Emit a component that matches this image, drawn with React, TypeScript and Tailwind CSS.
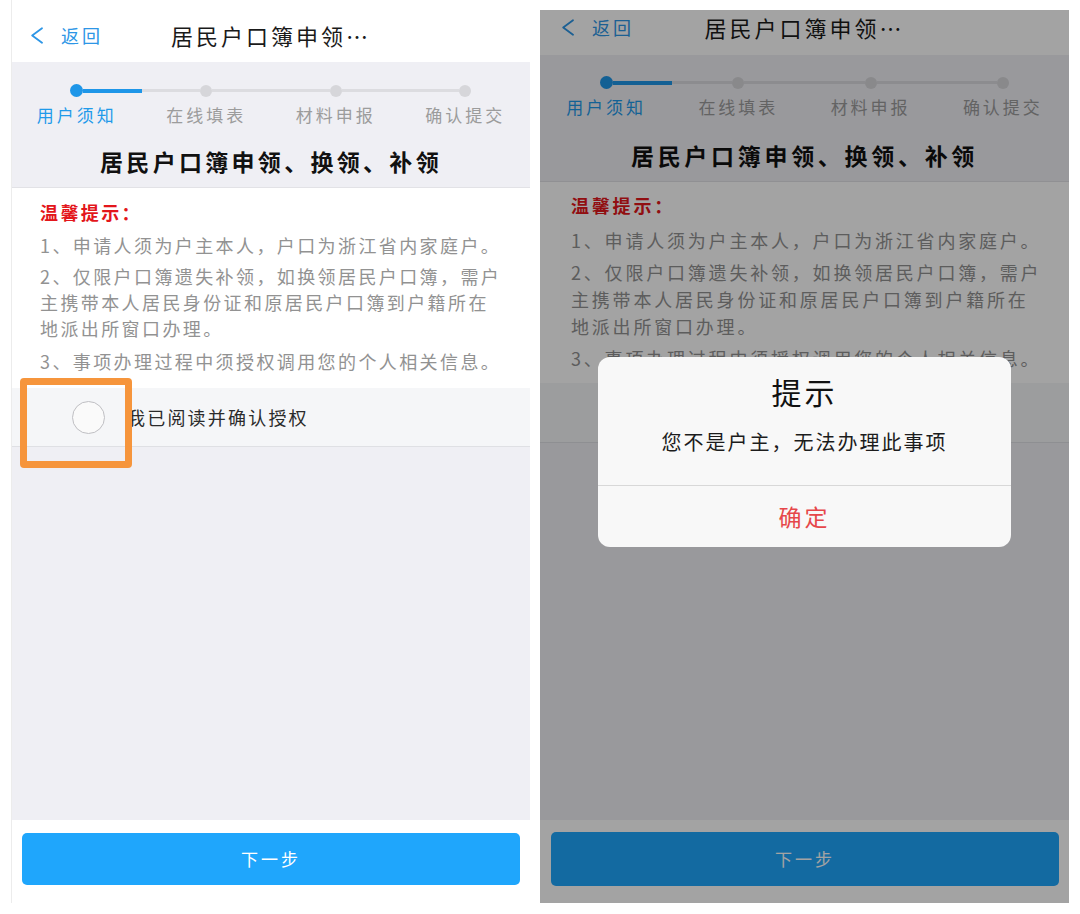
import React from 'react';

const steps = ['用户须知', '在线填表', '材料申报', '确认提交'];

function Chevron() {
  return (
    <svg width="14" height="17" viewBox="0 0 14 17" fill="none">
      <path d="M12 1.2 L2.2 8.5 L12 15.8" stroke="currentColor" strokeWidth="1.8" strokeLinecap="round" strokeLinejoin="round" />
    </svg>
  );
}

function Phone({ wide }: { wide: boolean }) {
  const v = wide
    ? {
        nav: 'h-[45px] pb-[11px]',
        back: 'pl-[21px]',
        band: 'h-[127px] pt-[21px]',
        title: 'mt-[23px] tracking-[3.7px]',
        content: 'h-[201px] pt-[10px] pl-[31px] leading-[27px] tracking-[2.8px]',
        p1: 'mt-[8px]',
        p2: 'mt-[5px]',
        p3: 'mt-[5px]',
        row: 'h-[60px] pl-[62px]',
        bottom: 'pt-[12px] pl-[11px] pr-[10px]',
        btn: 'h-[54px]',
      }
    : {
        nav: 'h-[62px] pt-[8px]',
        back: 'pl-[18px]',
        band: 'h-[126px] pt-[22px]',
        title: 'mt-[21px] tracking-[3.3px]',
        content: 'h-[200px] pt-[11px] pl-[28px] leading-[26px] tracking-[2.4px]',
        p1: 'mt-[7px]',
        p2: 'mt-[5px]',
        p3: 'mt-[7px]',
        row: 'h-[59px] pl-[60px]',
        bottom: 'pt-[13px] px-[10px]',
        btn: 'h-[52px]',
      };

  return (
    <div className="flex h-full w-full flex-col bg-[#efeff4]">
      {/* nav */}
      <div className={`grid shrink-0 grid-cols-[1fr_auto_1fr] items-center bg-white ${v.nav}`}>
        <div className={`flex items-center gap-[17px] text-[#2d96e6] ${v.back}`}>
          <Chevron />
          <span className="text-[18px] tracking-[3px]">返回</span>
        </div>
        <div className="text-[22px] tracking-[3px] text-[#1a1a1a]">居民户口簿申领⋯</div>
        <div />
      </div>

      {/* stepper */}
      <div className={`shrink-0 border-b border-[#e2e2e6] bg-[#efeff4] ${v.band}`}>
        <div className="grid grid-cols-4">
          {steps.map((s, i) => (
            <div key={s} className="flex flex-col items-center">
              <div className="flex h-[13px] w-full items-center">
                <div className={`h-[3px] flex-1 ${i === 0 ? 'bg-transparent' : 'bg-[#dcdce0]'}`} />
                {i === 0 ? (
                  <div className="h-[13px] w-[13px] rounded-full bg-[#1e96e8]" />
                ) : (
                  <div className="h-[12px] w-[12px] rounded-full bg-[#d6d6da]" />
                )}
                <div
                  className={`flex-1 ${
                    i === 0 ? 'h-[4px] bg-[#1e96e8]' : i === 3 ? 'h-[3px] bg-transparent' : 'h-[3px] bg-[#dcdce0]'
                  }`}
                />
              </div>
              <div
                className={`mt-[8px] text-[17px] leading-[20px] tracking-[3px] ${
                  i === 0 ? 'text-[#1f9aea]' : 'text-[#9c9c9c]'
                }`}
              >
                {s}
              </div>
            </div>
          ))}
        </div>
        <div className={`text-center text-[23px] font-bold leading-[30px] text-[#111] ${v.title}`}>
          居民户口簿申领、换领、补领
        </div>
      </div>

      {/* notice */}
      <div className={`shrink-0 bg-white text-[18px] text-[#929292] ${v.content}`}>
        <div className="font-bold text-[#e3161b]">温馨提示：</div>
        <div className={v.p1}>
          <div className="whitespace-nowrap">1、申请人须为户主本人，户口为浙江省内家庭户。</div>
        </div>
        <div className={v.p2}>
          <div className="whitespace-nowrap">2、仅限户口簿遗失补领，如换领居民户口簿，需户</div>
          <div className="whitespace-nowrap">主携带本人居民身份证和原居民户口簿到户籍所在</div>
          <div className="whitespace-nowrap">地派出所窗口办理。</div>
        </div>
        <div className={v.p3}>
          <div className="whitespace-nowrap">3、事项办理过程中须授权调用您的个人相关信息。</div>
        </div>
      </div>

      {/* agree row */}
      <div className={`flex shrink-0 items-center gap-[22px] border-b border-[#dfe0e4] bg-[#f5f6f8] ${v.row}`}>
        <div className="h-[33px] w-[33px] rounded-full border-[1.5px] border-[#bfbfc3] bg-[#fafafa]" />
        <span className="text-[18px] tracking-[2.2px] text-[#2b2b2b]">我已阅读并确认授权</span>
      </div>

      <div className="flex-1 bg-[#efeff4]" />

      {/* bottom */}
      <div className={`h-[83px] shrink-0 bg-white ${v.bottom}`}>
        <div
          className={`flex items-center justify-center rounded-[5px] bg-[#1fa6fc] text-[17px] tracking-[3px] text-white ${v.btn}`}
        >
          下一步
        </div>
      </div>
    </div>
  );
}

export default function App() {
  return (
    <div className="flex h-[914px] w-[1080px] bg-white font-['Noto_Sans_CJK_SC','Noto_Sans',sans-serif]">
      <div className="relative ml-[11px] h-[903px] w-[519px] border-l border-[#ececec]">
        <Phone wide={false} />
        <div className="absolute left-[8px] top-[378px] h-[90px] w-[112px] rounded-[4px] border-[7px] border-[#f6953c]" />
      </div>
      <div className="relative ml-[10px] mt-[10px] h-[893px] w-[529px] overflow-hidden">
        <Phone wide={true} />
        <div className="absolute inset-0 bg-black/[0.36]" />
        <div className="absolute left-[58px] top-[347px] flex h-[190px] w-[413px] flex-col overflow-hidden rounded-[12px] bg-[#f8f8f8]">
          <div className="flex h-[129px] shrink-0 flex-col items-center border-b border-[#d8d8d8] pt-[16px]">
            <div className="text-[30px] leading-[36px] tracking-[3px] text-[#111]">提示</div>
            <div className="mt-[19px] text-[20px] leading-[28px] tracking-[2px] text-[#1c1c1c]">
              您不是户主，无法办理此事项
            </div>
          </div>
          <div className="flex flex-1 items-center justify-center text-[23px] tracking-[3px] text-[#e6474a]">确定</div>
        </div>
      </div>
    </div>
  );
}
